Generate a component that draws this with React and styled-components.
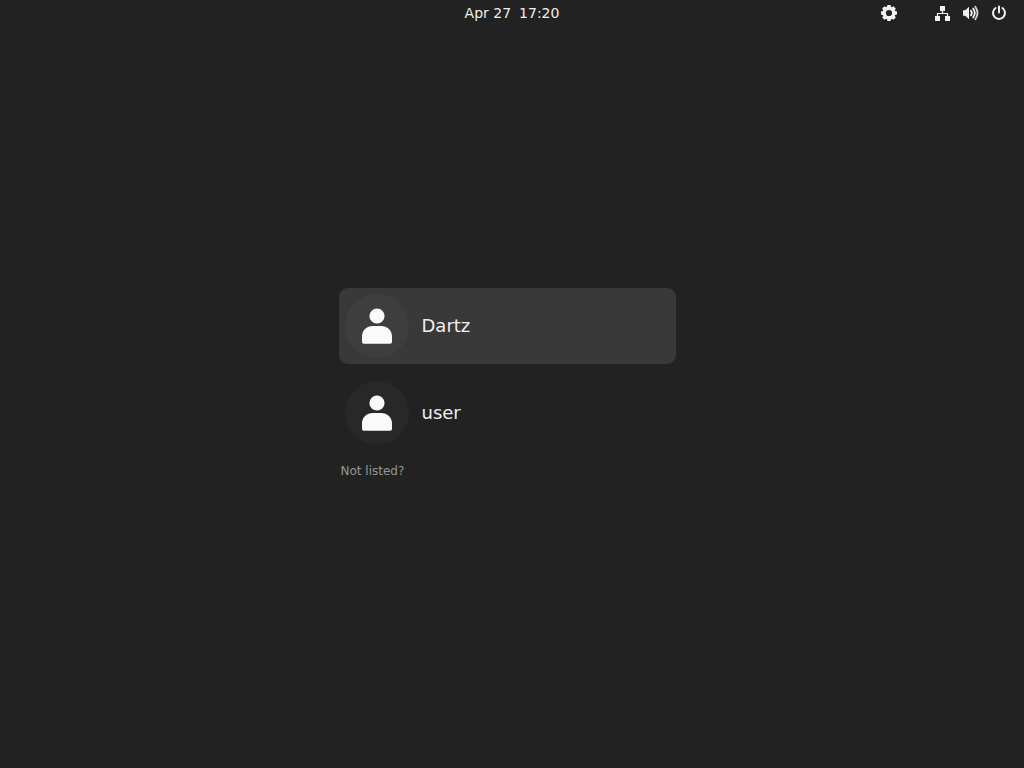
import React from "react";
import styled, { createGlobalStyle } from "styled-components";

const GlobalStyle = createGlobalStyle`
  *, *::before, *::after { box-sizing: border-box; }
  body {
    margin: 0;
    background: #222222;
    color: #eeeeee;
    font-family: "DejaVu Sans", sans-serif;
  }
  button { font-family: inherit; color: inherit; border: 0; background: none; padding: 0; margin: 0; }
`;

const Screen = styled.div`
  min-height: 100vh;
  display: grid;
  grid-template-rows: 1fr auto 1fr;
`;

const TopBar = styled.header`
  display: grid;
  grid-template-columns: 1fr auto 1fr;
  align-items: center;
  align-self: start;
  height: 26px;
  padding: 0 16px;
`;

const Clock = styled.button`
  grid-column: 2;
  display: flex;
  gap: 8px;
  font-size: 14px;
  line-height: 20px;
`;

const Status = styled.div`
  justify-self: end;
  display: flex;
  align-items: center;
  gap: 36px;
`;

const SystemMenu = styled.div`
  display: flex;
  gap: 10px;
`;

const IconButton = styled.button`
  display: grid;
  place-items: center;
  width: 18px;
  height: 18px;
  svg { display: block; }
`;

const Chooser = styled.main`
  display: flex;
  flex-direction: column;
  gap: 11px;
  width: 100%;
  max-width: 347px;
  padding-right: 10px;
  justify-self: center;
`;

const UserList = styled.ul`
  display: flex;
  flex-direction: column;
  gap: 11px;
  list-style: none;
  margin: 0;
  padding: 0;
`;

const UserButton = styled.button`
  display: flex;
  align-items: center;
  gap: 13px;
  width: 100%;
  && { padding: 6px; }
  border-radius: 9px;
  && { background: ${(p) => (p.$selected ? "#393939" : "transparent")}; }
  font-size: 18px;
  line-height: 24px;
  text-align: left;
`;

const Avatar = styled.span`
  display: grid;
  place-items: center;
  width: 64px;
  height: 64px;
  border-radius: 50%;
  background: ${(p) => (p.$selected ? "#3e3e3e" : "#282828")};
`;

const NotListed = styled.button`
  align-self: flex-start;
  && { padding: 0 2px; color: #969696; }
  font-size: 12px;
  line-height: 18px;
`;

const PersonIcon = () => (
  <svg width="32" height="36" viewBox="0 0 32 36" fill="#fafafa" aria-hidden="true">
    <circle cx="16" cy="8" r="7.6" />
    <path d="M12 18h8C26.500 18 31 22.500 31 28.500V34a1.800 1.800 0 0 1-1.800 1.800H2.800A1.800 1.800 0 0 1 1 34v-5.500C1 22.500 5.500 18 12 18z" />
  </svg>
);

const teeth = [0, 45, 90, 135, 180, 225, 270, 315];

const GearIcon = () => (
  <svg width="18" height="18" viewBox="0 0 18 18" aria-hidden="true">
    <circle cx="9" cy="9" r="4.800" fill="none" stroke="#f2f2f2" strokeWidth="3.400" />
    {teeth.map((a) => (
      <path key={a} d="M6.800 3.500 7.400 1h3.200l.6 2.500z" fill="#f2f2f2" transform={`rotate(${a} 9 9)`} />
    ))}
  </svg>
);

const NetworkIcon = () => (
  <svg width="18" height="18" viewBox="0 0 18 18" fill="#f2f2f2" aria-hidden="true">
    <path d="M6 2h5v5H6zM1 12h5v5H1zM11 12h5v5h-5z" />
    <path d="M3.500 12.500v-3h10v3M8.500 7v2.500" fill="none" stroke="#f2f2f2" strokeWidth="1.200" />
  </svg>
);

const VolumeIcon = () => (
  <svg width="18" height="18" viewBox="0 0 18 18" fill="#f2f2f2" aria-hidden="true">
    <path d="M1 6.300h2.300L7 2.800v12.400l-3.700-3.500H1z" />
    <g fill="none" stroke="#f2f2f2" strokeLinecap="round" strokeWidth="1.800">
      <path d="M8.900 6.600q1.800 2.400 0 4.800" />
      <path d="M11.200 4.600q3.200 4.400 0 8.800" />
      <path d="M13.300 2.800q4.400 6.200 0 12.400" stroke="#d5d5d5" />
    </g>
  </svg>
);

const PowerIcon = () => (
  <svg width="18" height="18" viewBox="0 0 18 18" fill="none" stroke="#f2f2f2" strokeWidth="2" strokeLinecap="round" aria-hidden="true">
    <path d="M9 2.500v6M5.600 4a6 6 0 1 0 6.800 0" />
  </svg>
);

const users = ["Dartz", "user"];

export default function App() {
  const [selected, setSelected] = React.useState("Dartz");
  return (
    <>
      <GlobalStyle />
      <Screen>
        <TopBar>
          <Clock type="button">
            <span>Apr 27</span>
            <span>17:20</span>
          </Clock>
          <Status>
            <IconButton type="button" aria-label="Session settings"><GearIcon /></IconButton>
            <SystemMenu>
              <IconButton type="button" aria-label="Wired network"><NetworkIcon /></IconButton>
              <IconButton type="button" aria-label="Volume"><VolumeIcon /></IconButton>
              <IconButton type="button" aria-label="Power"><PowerIcon /></IconButton>
            </SystemMenu>
          </Status>
        </TopBar>
        <Chooser>
          <UserList>
            {users.map((name) => (
              <li key={name}>
                <UserButton type="button" $selected={name === selected} onClick={() => setSelected(name)}>
                  <Avatar $selected={name === selected}><PersonIcon /></Avatar>
                  <span>{name}</span>
                </UserButton>
              </li>
            ))}
          </UserList>
          <NotListed type="button">Not listed?</NotListed>
        </Chooser>
      </Screen>
    </>
  );
}
